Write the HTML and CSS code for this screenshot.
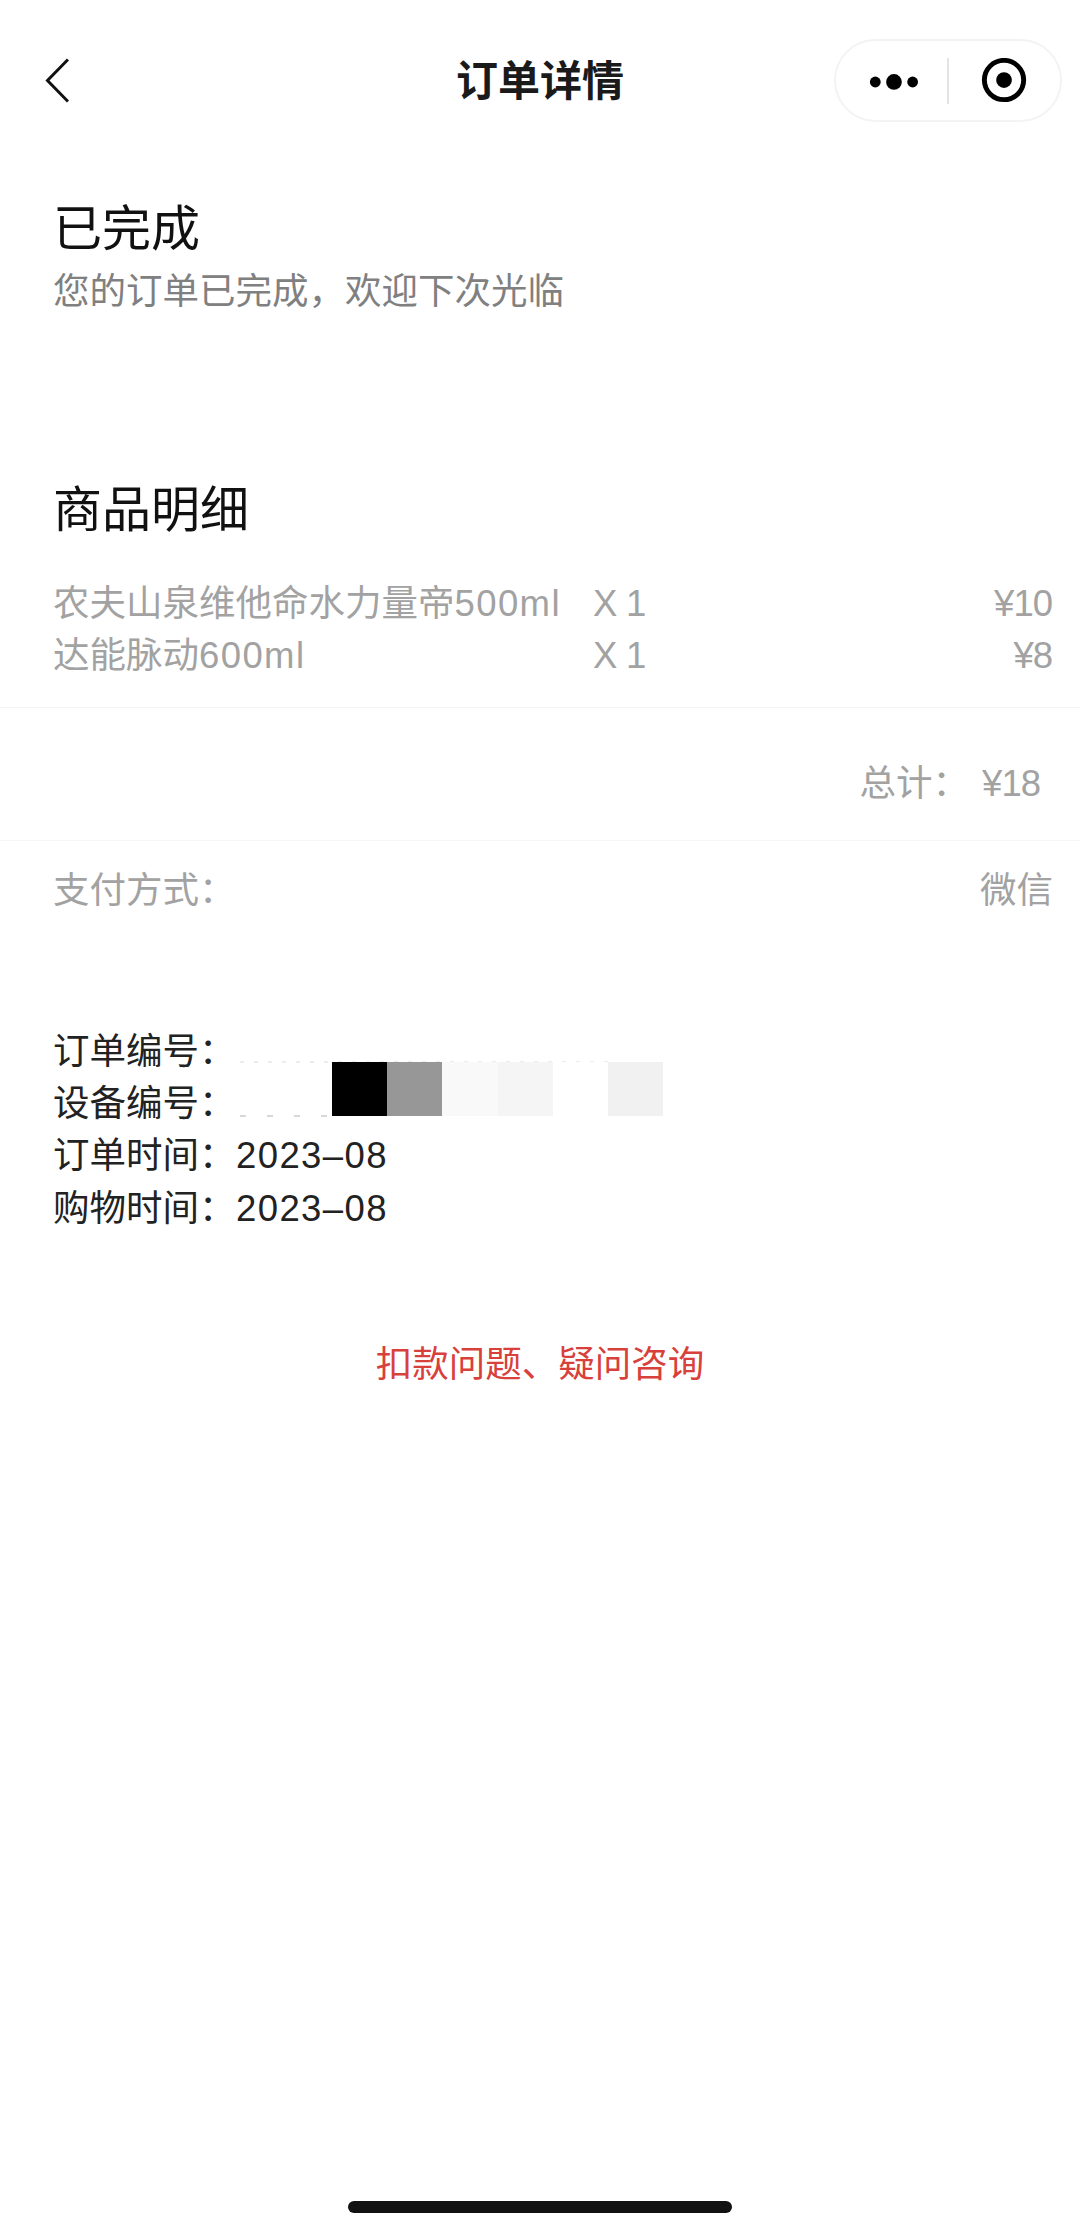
FILE: index.html
```html
<!DOCTYPE html>
<html lang="zh-CN">
<head>
    <meta charset="UTF-8">
    <title>订单详情</title>
    <link rel="stylesheet" href="styles.css">
</head>
<body>
    <div class="page">
        <!-- Top bar -->
        <header class="nav">
            <svg class="back" width="24" height="45" viewBox="0 0 24 45">
                <path d="M23 1.5 L2.5 22.5 L23 43.5" fill="none" stroke="#111" stroke-width="3"/>
            </svg>
            <div class="nav-title">订单详情</div>
            <div class="capsule">
                <svg width="113" height="46" viewBox="0 0 113 46">
                    <circle cx="40" cy="24" r="5.5"/>
                    <circle cx="59" cy="24" r="8"/>
                    <circle cx="78" cy="24" r="5.5"/>
                </svg>
                <span class="capsule-line"></span>
                <svg width="113" height="46" viewBox="0 0 113 46">
                    <circle cx="56" cy="22" r="20" fill="none" stroke="#000" stroke-width="5"/>
                    <circle cx="56" cy="22" r="8"/>
                </svg>
            </div>
        </header>

        <section class="status">
            <h2 class="big-title">已完成</h2>
            <p class="status-text">您的订单已完成，欢迎下次光临</p>
        </section>

        <section class="goods">
            <h2 class="big-title">商品明细</h2>
            <div class="goods-list">
                <div class="goods-row">
                    <span>农夫山泉维他命水力量帝<span class="num">500ml</span></span>
                    <span class="qty">X 1</span>
                    <span class="price">¥10</span>
                </div>
                <div class="goods-row">
                    <span>达能脉动<span class="num">600ml</span></span>
                    <span class="qty">X 1</span>
                    <span class="price">¥8</span>
                </div>
            </div>
        </section>

        <div class="total">
            <span>总计：</span>
            <span class="price">¥18</span>
        </div>

        <div class="pay">
            <span>支付方式：</span>
            <span>微信</span>
        </div>

        <section class="info">
            <div class="info-row"><span class="info-label">订单编号：</span></div>
            <div class="info-row"><span class="info-label">设备编号：</span></div>
            <div class="info-row"><span class="info-label">订单时间：</span><span class="num">2023–08</span></div>
            <div class="info-row"><span class="info-label">购物时间：</span><span class="num">2023–08</span></div>
            <!-- Faint leftovers of the covered digits along the mosaic edges -->
            <div class="specks specks-top"></div>
            <div class="specks specks-bottom"></div>
            <!-- Mosaic covering the order and device numbers -->
            <div class="mosaic">
                <i class="m-black"></i>
                <i class="m-gray"></i>
                <i class="m-f9"></i>
                <i class="m-f5"></i>
                <i class="m-white"></i>
                <i class="m-f1"></i>
            </div>
        </section>

        <div class="help">扣款问题、疑问咨询</div>

        <div class="home-bar"></div>
    </div>
</body>
</html>
```

FILE: styles.css
```css
/* Basic Styling */
* {
    box-sizing: border-box;
}

body {
    margin: 0;
    background-color: #fff;
    font-family: "Liberation Sans", "Noto Sans CJK SC", sans-serif;
    font-size: 36.5px;
    line-height: 52px;
    color: #222;
}

.page {
    display: flex;
    flex-direction: column;
    width: 1080px;
    height: 2235px;
    overflow: hidden;
}

/* Top bar */
.nav {
    display: grid;
    grid-template-columns: 1fr auto 1fr;
    align-items: center;
    height: 122px;
    padding: 39px 18px 0;
}

.back {
    display: block;
    margin-left: 27px;
    margin-bottom: 1px;
}

.nav-title {
    margin-top: 2px;
    font-size: 42px;
    font-weight: bold;
    color: #1a1a1a;
}

.capsule {
    justify-self: end;
    display: flex;
    align-items: center;
    width: 228px;
    height: 83px;
    border: 2px solid #f3f3f3;
    border-radius: 42px;
}

.capsule-line {
    width: 2px;
    height: 46px;
    background-color: #e4e4e4;
}

.big-title {
    margin: 0;
    font-size: 49px;
    font-weight: normal;
    line-height: 64px;
    color: #111;
}

/* Status */
.status {
    margin-top: 75px;
    padding-left: 53px;
}

.status-text {
    margin: 5px 0 0;
    color: #808080;
}

/* Goods */
.goods {
    margin-top: 160px;
    padding: 0 28px 25px 53px;
    border-bottom: 1px solid #f5f5f5;
}

.goods-list {
    margin-top: 36px;
    color: #a2a2a2;
}

.goods-row {
    display: grid;
    grid-template-columns: 540px auto 1fr;
}

.num {
    letter-spacing: 1.4px;
}

.qty {
    word-spacing: -1.5px;
}

.price {
    text-align: right;
    letter-spacing: -1px;
}

.total {
    display: flex;
    justify-content: flex-end;
    gap: 13px;
    padding: 50px 40px 30px 0;
    border-bottom: 1px solid #f5f5f5;
    color: #a2a2a2;
}

.pay {
    display: flex;
    justify-content: space-between;
    padding: 24px 27px 0 53px;
    color: #a2a2a2;
}

/* Order info */
.info {
    position: relative;
    margin-top: 109px;
    padding-left: 53px;
    line-height: 52.2px;
}

.info-row {
    display: flex;
    height: 52.2px;
}

.info-label {
    width: 183px;
}

.mosaic {
    position: absolute;
    left: 332px;
    top: 36px;
    display: flex;
    height: 54px;
}

.mosaic i {
    display: block;
    width: 55.2px;
}

.m-black { background-color: #000; }
.m-gray { background-color: #979797; }
.m-f9 { background-color: #f9f9f9; }
.m-f5 { background-color: #f5f5f5; }
.m-white { background-color: #fff; }
.m-f1 { background-color: #f1f1f1; }

.specks {
    position: absolute;
    height: 2px;
    background-image: repeating-linear-gradient(90deg, #ececec 0 4px, transparent 4px 14px);
}

.specks-top {
    left: 240px;
    top: 35px;
    width: 370px;
}

.specks-bottom {
    left: 240px;
    top: 89px;
    width: 92px;
    background-image: repeating-linear-gradient(90deg, #d8d8d8 0 6px, transparent 6px 27px);
}

.help {
    margin-top: 104px;
    text-align: center;
    color: #d8403b;
}

.home-bar {
    width: 384px;
    height: 12px;
    margin: auto auto 22px;
    border-radius: 6px;
    background-color: #111;
}
```
